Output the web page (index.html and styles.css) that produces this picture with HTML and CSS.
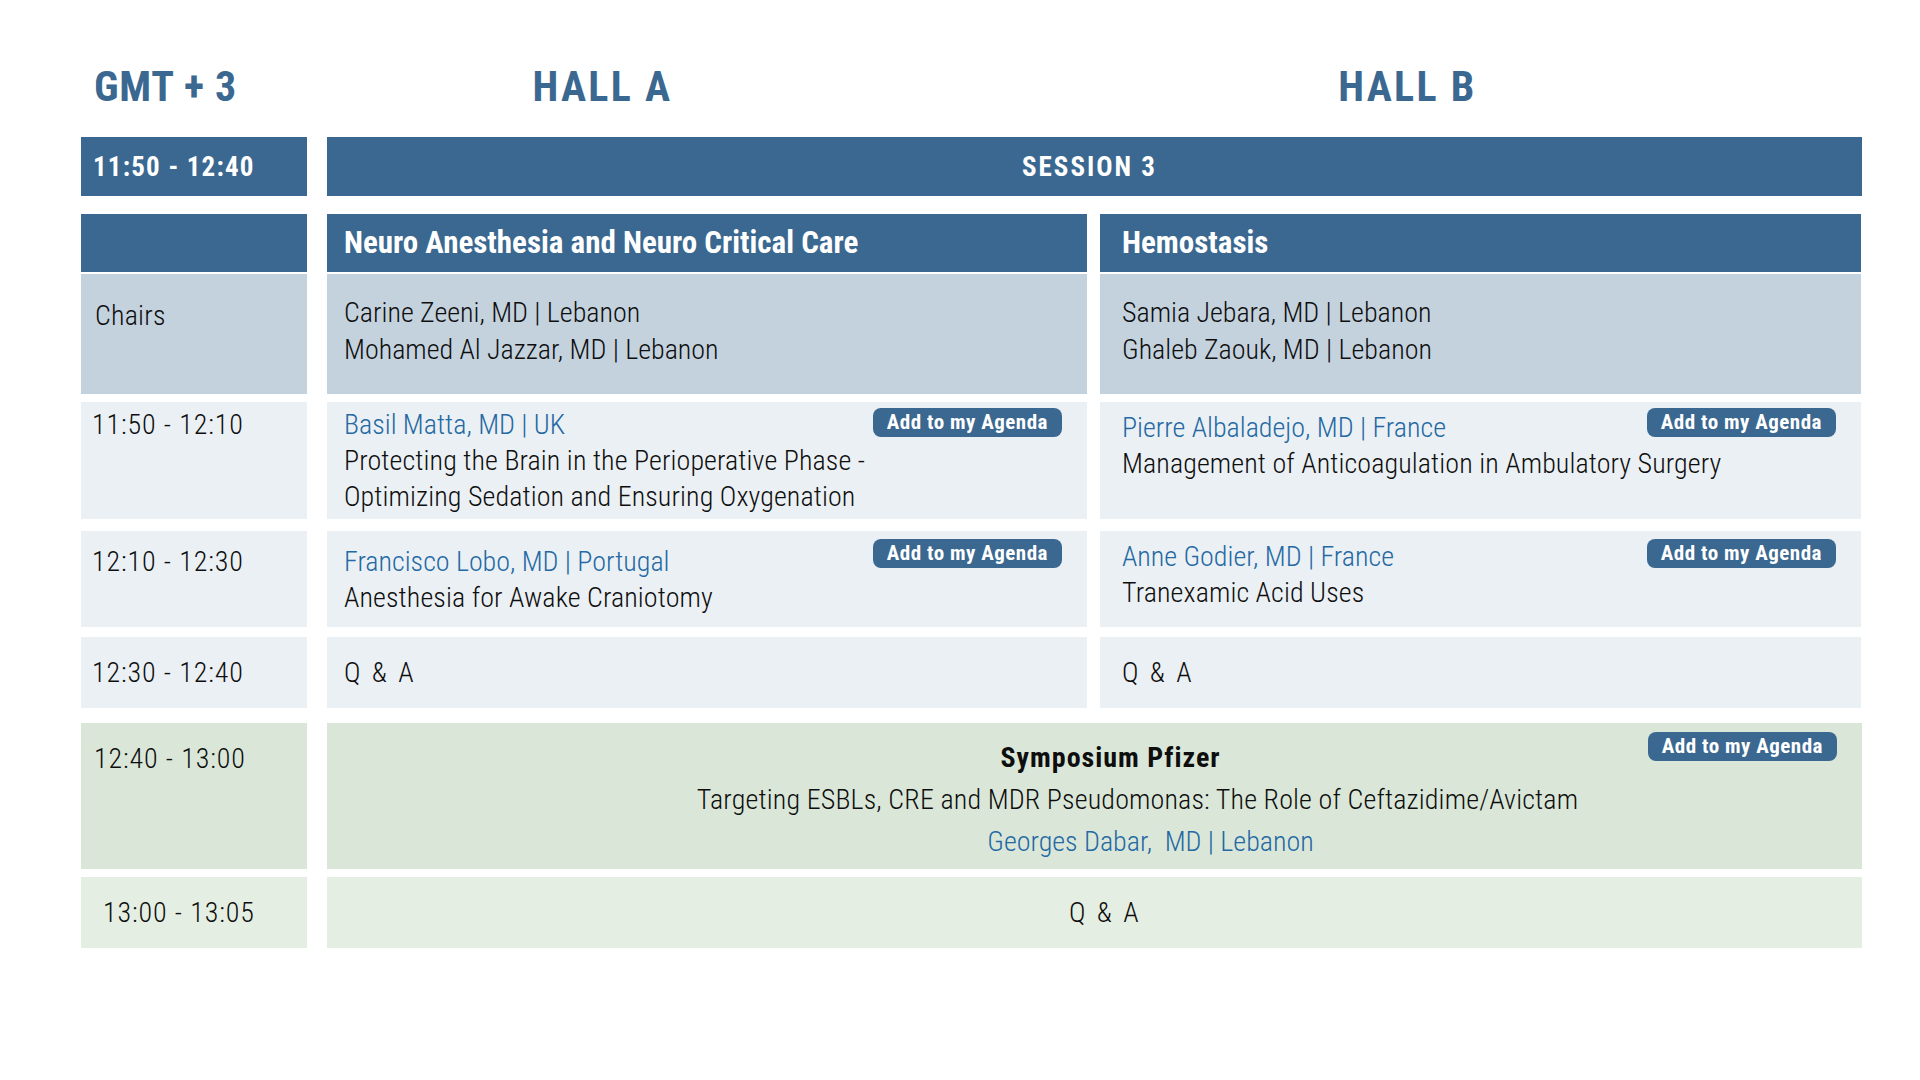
FILE: index.html
```html
<!DOCTYPE html>
<html lang="en">
<head>
<meta charset="utf-8">
<title>Session 3 Programme</title>
<link rel="stylesheet" href="styles.css">
</head>
<body>
<div class="schedule">
  <div class="hall-heads">
    <div class="gmt">GMT + 3</div>
    <div class="hall-name">HALL A</div>
    <div class="hall-name">HALL B</div>
  </div>

  <div class="row row-session">
    <div class="time dark time-bold">11:50 - 12:40</div>
    <div class="span dark session-name">SESSION 3</div>
  </div>

  <div class="row row-titles">
    <div class="time dark"></div>
    <div class="hall hall-a dark title">Neuro Anesthesia and Neuro Critical Care</div>
    <div class="hall hall-b dark title">Hemostasis</div>
  </div>

  <div class="row row-chairs">
    <div class="time chairs chairs-label">Chairs</div>
    <div class="hall hall-a chairs chairs-text">Carine Zeeni, MD | Lebanon<br>Mohamed Al Jazzar, MD | Lebanon</div>
    <div class="hall hall-b chairs chairs-text">Samia Jebara, MD | Lebanon<br>Ghaleb Zaouk, MD | Lebanon</div>
  </div>

  <div class="row row-talk1">
    <div class="time light t1">11:50 - 12:10</div>
    <div class="hall hall-a light talk t1a">
      <span class="agenda-btn">Add to my Agenda</span>
      <div class="speaker">Basil Matta, MD | UK</div>
      <div class="topic">Protecting the Brain in the Perioperative Phase -<br>Optimizing Sedation and Ensuring Oxygenation</div>
    </div>
    <div class="hall hall-b light talk t1b">
      <span class="agenda-btn">Add to my Agenda</span>
      <div class="speaker">Pierre Albaladejo, MD | France</div>
      <div class="topic">Management of Anticoagulation in Ambulatory Surgery</div>
    </div>
  </div>

  <div class="row row-talk2">
    <div class="time light t2">12:10 - 12:30</div>
    <div class="hall hall-a light talk t2a">
      <span class="agenda-btn btn-low">Add to my Agenda</span>
      <div class="speaker">Francisco Lobo, MD | Portugal</div>
      <div class="topic">Anesthesia for Awake Craniotomy</div>
    </div>
    <div class="hall hall-b light talk t2b">
      <span class="agenda-btn btn-low">Add to my Agenda</span>
      <div class="speaker">Anne Godier, MD | France</div>
      <div class="topic">Tranexamic Acid Uses</div>
    </div>
  </div>

  <div class="row row-qa">
    <div class="time light mid">12:30 - 12:40</div>
    <div class="hall hall-a light mid qa">Q &amp; A</div>
    <div class="hall hall-b light mid qa">Q &amp; A</div>
  </div>

  <div class="row row-sym">
    <div class="time green sym-time">12:40 - 13:00</div>
    <div class="span green sym">
      <span class="agenda-btn btn-sym">Add to my Agenda</span>
      <div class="sym-title">Symposium Pfizer</div>
      <div class="sym-topic">Targeting ESBLs, CRE and MDR Pseudomonas: The Role of Ceftazidime/Avictam</div>
      <div class="sym-speaker">Georges Dabar,&nbsp; MD | Lebanon</div>
    </div>
  </div>

  <div class="row row-qa2">
    <div class="time green-light mid time-indent">13:00 - 13:05</div>
    <div class="span green-light mid qa qa-center">Q &amp; A</div>
  </div>
</div>
</body>
</html>
```

FILE: styles.css
```css
* { box-sizing: border-box; }

html, body {
  margin: 0;
  padding: 0;
  background: #ffffff;
}

body {
  font-family: "Roboto", "DejaVu Sans Condensed", sans-serif;
  font-stretch: 80%;
  font-weight: 350;
  color: #0e0e0e;
  font-size: 28px;
  line-height: 36px;
}

.schedule {
  padding-left: 81px;
  width: 1862px;
}

/* top hall headings */
.hall-heads {
  display: grid;
  grid-template-columns: 119px 805px 805px;
  padding-top: 66px;
  height: 137px;
  color: #3a6890;
  font-weight: bold;
  font-size: 42px;
  line-height: 42px;
  white-space: nowrap;
}
.gmt {
  padding-left: 13px;
  letter-spacing: 0.7px;
}
.hall-name {
  text-align: center;
  letter-spacing: 2.3px;
}

/* rows */
.row {
  display: flex;
}
.time {
  width: 226px;
  flex: none;
  margin-right: 20px;
  padding-left: 11px;
  letter-spacing: 0.9px;
  white-space: nowrap;
}
.hall {
  position: relative;
  width: 760px;
  flex: none;
}
.hall-b {
  width: 761px;
  margin-left: 13px;
}
.span {
  position: relative;
  width: 1535px;
  flex: none;
}

.dark { background: #3a6890; color: #ffffff; }
.chairs { background: #c4d2de; }
.light { background: #ebf0f4; }
.green { background: #dae7d8; }
.green-light { background: #e4eee2; }

.row-session { height: 59px; }
.row-session .dark {
  display: flex;
  align-items: center;
  font-weight: bold;
  font-size: 27px;
}
.time-bold { letter-spacing: 1.2px; padding-left: 12px; }
.session-name {
  justify-content: center;
  letter-spacing: 2px;
  padding-right: 10px;
}

.row-titles { margin-top: 18px; height: 58px; }
.title {
  display: flex;
  align-items: center;
  font-weight: bold;
  font-size: 31px;
  padding-left: 17px;
}
.hall-b.title { padding-left: 22px; }

.row-chairs { margin-top: 2px; height: 120px; }
.chairs-label { padding-top: 24px; padding-left: 14px; letter-spacing: 0.2px; }
.chairs-text { padding-top: 20px; padding-left: 17px; line-height: 37px; }
.hall-b.chairs-text { padding-left: 22px; }

.row-talk1 { margin-top: 8px; height: 117px; }
.row-talk2 { margin-top: 12px; height: 96px; }
.talk { padding-left: 17px; }
.hall-b.talk { padding-left: 22px; }
.t1, .t1a { padding-top: 5px; }
.t1b { padding-top: 8px; }
.t2, .t2a { padding-top: 13px; }
.t2b { padding-top: 8px; }

.speaker { color: #2469a3; }
.topic { letter-spacing: 0.1px; }

.agenda-btn {
  position: absolute;
  top: 6px;
  right: 25px;
  height: 29px;
  padding: 0 14px;
  border-radius: 8px;
  background: #3a6890;
  color: #ffffff;
  font-weight: bold;
  font-size: 21px;
  line-height: 29px;
  letter-spacing: 0.5px;
  white-space: nowrap;
}
.btn-low { top: 8px; }
.btn-sym { top: 9px; right: 25px; }

.row-qa { margin-top: 10px; height: 71px; }
.mid {
  display: flex;
  align-items: center;
}
.qa { padding-left: 17px; letter-spacing: 1.5px; word-spacing: 2px; }
.hall-b.qa { padding-left: 22px; }

.row-sym { margin-top: 15px; height: 146px; }
.sym-time { padding-top: 18px; padding-left: 13px; }
.sym {
  padding-top: 14px;
  text-align: center;
  line-height: 42px;
}
.sym-title { font-weight: bold; font-size: 28px; letter-spacing: 1px; padding-left: 32px; }
.sym-topic { padding-left: 86px; letter-spacing: 0.15px; }
.sym-speaker { color: #2469a3; padding-left: 112px; }

.row-qa2 { margin-top: 8px; height: 71px; }
.time-indent { padding-left: 22px; }
.qa-center { justify-content: center; padding-left: 20px; }
```
